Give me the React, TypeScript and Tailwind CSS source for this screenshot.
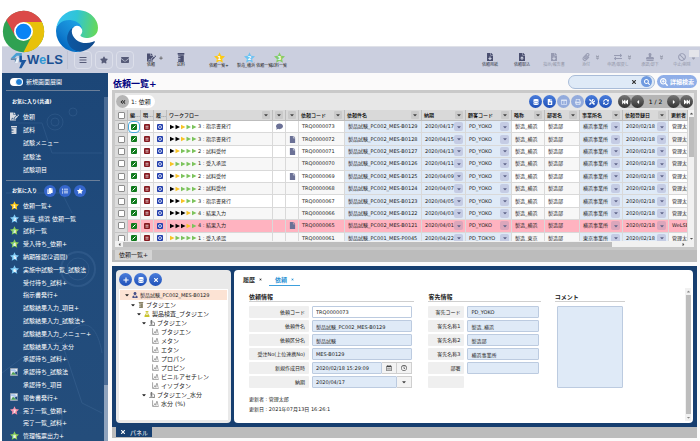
import type { ReactNode } from "react";
import type { IconType } from "react-icons";
import {
  FaAngleDoubleDown, FaAngleDoubleLeft, FaBan, FaBars, FaCaretDown, FaCaretLeft, FaCaretRight, FaCaretUp,
  FaColumns, FaComment, FaCopy, FaDatabase, FaEnvelope, FaExchangeAlt, FaFastBackward, FaFastForward,
  FaFile, FaFileDownload, FaFileSignature, FaFileUpload, FaFlask, FaListUl, FaMicroscope, FaPaperclip,
  FaPlus, FaPrescriptionBottle, FaPrint, FaRegCalendarAlt, FaRegClock, FaSearch, FaSearchPlus, FaStamp,
  FaStar, FaSyncAlt, FaTimes, FaTools, FaUserTie,
} from "react-icons/fa";
import clsx from "clsx";

/* ---------- logos and small drawings ---------- */

function ChromeLogo() {
  return (
    <svg viewBox="-1 -1 50 50" className="size-[43px]" aria-label="Chrome">
      <circle cx="24" cy="24" r="24" fill="#2fa152" />
      <path d="M24 13H45.4A24 24 0 0 1 24 48L33.5 29.5Z" fill="#e8c10a" />
      <path d="M4 10.700A24 24 0 0 1 45.400 13H24L14.500 29.500Z" fill="#db4a48" />
      <circle cx="24" cy="24" r="11" fill="#fff" />
      <circle cx="24" cy="24" r="9" fill="#0a84f5" />
    </svg>
  );
}

function EdgeLogo() {
  return (
    <svg viewBox="0 0 256 256" className="size-[42px]" aria-label="Edge">
      <defs>
        <linearGradient id="edgeDark" x1="60" y1="180" x2="240" y2="180" gradientUnits="userSpaceOnUse">
          <stop offset="0" stopColor="#0c59a4" />
          <stop offset="1" stopColor="#114a8b" />
        </linearGradient>
        <linearGradient id="edgeMid" x1="150" y1="100" x2="40" y2="225" gradientUnits="userSpaceOnUse">
          <stop offset="0" stopColor="#1b9de2" />
          <stop offset="0.6" stopColor="#1380d0" />
          <stop offset="1" stopColor="#0067c0" />
        </linearGradient>
        <linearGradient id="edgeTop" x1="10" y1="70" x2="250" y2="110" gradientUnits="userSpaceOnUse">
          <stop offset="0" stopColor="#35c1f1" />
          <stop offset="0.45" stopColor="#2fc5d6" />
          <stop offset="1" stopColor="#66d85a" />
        </linearGradient>
      </defs>
      <path fill="url(#edgeDark)" d="M231 190.5c-3.4 1.8-6.9 3.4-10.500 4.700a101.500 101.500 0 0 1-35.900 6.500c-47.300 0-88.500-32.500-88.500-74.300a31.500 31.500 0 0 1 16.400-27.300c-42.800 1.800-53.800 46.400-53.800 72.500 0 73.900 68.100 81.400 82.800 81.400 7.900 0 19.800-2.300 27-4.600l1.300-.4a128.300 128.300 0 0 0 66.600-52.800 4 4 0 0 0-5.400-5.700Z" />
      <path fill="url(#edgeMid)" d="M105.700 241.400a79.200 79.200 0 0 1-22.700-21.300 80.700 80.700 0 0 1 29.500-120c3.200-1.500 8.500-4.100 15.600-4a32.400 32.400 0 0 1 25.700 13 31.900 31.900 0 0 1 6.300 18.700c0-.2 24.500-79.600-80-79.600-43.900 0-80 41.600-80 78.200a130.200 130.200 0 0 0 12.100 56 128 128 0 0 0 156.400 67 75.500 75.500 0 0 1-62.800-8Z" />
      <path fill="url(#edgeTop)" d="M152.300 148.900c-.9 1-3.400 2.500-3.400 5.600 0 2.600 1.700 5.200 4.800 7.300 14.300 10 41.400 8.600 41.500 8.600a59.600 59.600 0 0 0 30.300-8.300 61.400 61.400 0 0 0 30.400-52.900c.3-22.400-8-37.300-11.300-43.900C223.500 23.900 177.700 0 128 0A128 128 0 0 0 0 126.200c.5-36.500 36.800-66 80-66 3.500 0 23.500.3 42 10a72.600 72.600 0 0 1 30.900 29.300c6.100 10.600 7.200 24.100 7.200 29.500 0 5.400-2.700 13.300-7.800 19.900Z" />
    </svg>
  );
}

function WelsMark() {
  return (
    <svg viewBox="0 0 50 54" className="h-[18px] w-[17px]" aria-hidden="true">
      <path d="M2 22 18 6H35V29H28V14H20L13 22Z" fill="#4a9fd4" />
      <path d="M2 22H20V35H14V27H2Z" fill="#5f86ad" />
      <path d="M20 22H27L22 36H14Z" fill="#e9f1f8" />
      <path d="M28 14H35V27H49L34 52H27L34 34H28Z" fill="#1c57a0" />
    </svg>
  );
}

function NumberStar({ n, color, className }: { n: number; color: string; className?: string }) {
  return (
    <svg viewBox="0 0 24 24" className={clsx("shrink-0", className)} aria-hidden="true">
      <path d="M12 0.500 15.500 8.300 24 9.200 17.700 15 19.400 23.500 12 19.200 4.600 23.500 6.300 15 0 9.200 8.500 8.300Z" fill={color} />
      <text x="12" y="17.500" textAnchor="middle" fontSize="12" fontWeight="bold" fill="#fff">{n}</text>
    </svg>
  );
}

function BrokenImage() {
  return (
    <svg viewBox="0 0 24 24" className="size-2 shrink-0" aria-hidden="true">
      <path d="M1 1H23V23H1Z" fill="#e8eef5" stroke="#8a94a3" strokeWidth="2" />
      <path d="M3 20 9 11 14 16 20 20Z" fill="#4b9e52" />
      <path d="M3 4H15L19 9V13L3 8Z" fill="#a9c4ea" />
      <path d="M13 14 22 10V22Z" fill="#1f4a7b" />
    </svg>
  );
}

function PeakChart() {
  return (
    <svg viewBox="0 0 24 24" className="size-[7px] shrink-0" fill="none" stroke="#666" strokeWidth="2" aria-hidden="true">
      <path d="M2 1V22H23" />
      <path d="M5 19C9 18 9 12 10 12S12 18 13 18 15 4 17 4 19 18 22 19" />
    </svg>
  );
}

function Arrows({ steps }: { steps: string }) {
  const fill: Record<string, string> = { k: "#000", y: "#f7c325", g: "#7cc35c" };
  return (
    <svg viewBox="0 0 54 12" className="h-[6px] w-[27px] shrink-0" aria-hidden="true">
      {steps.split("").map((s, i) => (
        <path key={i} d={`M${i * 11} 1.500 ${i * 11 + 9} 6 ${i * 11} 10.500Z`} fill={fill[s]} />
      ))}
    </svg>
  );
}

/* ---------- header ---------- */

function HeaderItem({ icon, label, faded, more }: { icon: ReactNode; label: string; faded?: boolean; more?: boolean }) {
  return (
    <button
      type="button"
      className={clsx(
        "relative flex w-8 flex-col items-center text-[4px] leading-[6px] whitespace-nowrap text-[#33374a]",
        faded && "opacity-40"
      )}
    >
      <span className="flex h-[9px] items-center text-[8px] text-[#4a4f70]">{icon}</span>
      {label}
      {more && <FaAngleDoubleDown className="absolute top-0.5 right-0.5 text-[5px]" />}
    </button>
  );
}

function Header() {
  const square = "flex size-[18px] items-center justify-center rounded-sm border border-[#dcdfea] text-[8px] text-[#565b78]";
  const starItem = "flex w-[30px] flex-col items-center text-[4px] leading-[6px] whitespace-nowrap text-[#222]";
  return (
    <header className="ml-0.5 flex h-[27px] shrink-0 items-center border-t border-[#dfe1e8] bg-[#cbcfdf]">
      <div className="flex w-[66px] items-center border-r border-[#bfc3d4] pl-2">
        <WelsMark />
        <span className="font-['Liberation_Sans',sans-serif] text-[13px] leading-4 font-bold text-[#1a4f92]">
          W<span className="text-[#2f97d4]">e</span>LS
        </span>
      </div>
      <div className="flex gap-[3px] pl-1.5">
        <button type="button" aria-label="メニュー" className={square}><FaBars /></button>
        <button type="button" aria-label="お気に入り" className={square}><FaStar /></button>
        <button type="button" aria-label="メッセージ" className={square}><FaEnvelope /></button>
      </div>
      <div className="flex pl-0.5">
        <button type="button" className={clsx(starItem, "relative")}>
          <FaFileSignature className="h-[9px] text-[9px] text-[#4a4f70]" />
          依頼
          <FaPlus className="absolute top-[3px] right-[3px] text-[4px] text-[#555]" />
        </button>
        <button type="button" className={starItem}>
          <FaPrescriptionBottle className="h-[9px] text-[8px] text-[#4a4f70]" />
          試料
        </button>
      </div>
      <div className="flex pl-2">
        <button type="button" className={starItem}>
          <NumberStar n={1} color="#fdc914" className="size-[11px]" />
          依頼一覧+
        </button>
        <button type="button" className={starItem}>
          <NumberStar n={2} color="#6ec3f2" className="size-[11px]" />
          <span className="self-start pl-[3px]">製造_横浜 依頼一覧</span>
        </button>
        <button type="button" className={starItem}>
          <NumberStar n={3} color="#86cc66" className="size-[11px]" />
          試料一覧
        </button>
      </div>
      <div className="relative ml-auto flex pr-0.5">
        <HeaderItem icon={<FaFileDownload />} label="依頼用紙" />
        <HeaderItem icon={<FaFileUpload />} label="依頼取込" />
        <HeaderItem icon={<FaFileDownload />} label="指示/報告書" faded />
        <HeaderItem icon={<FaPaperclip />} label="添付" faded more />
        <HeaderItem icon={<FaExchangeAlt />} label="申請/取戻し" faded more />
        <HeaderItem icon={<FaStamp />} label="承認/却下" faded more />
        <HeaderItem icon={<FaBan />} label="中止/削除" faded more />
        <span className="absolute -top-[3px] right-px h-[7px] w-2.5 bg-[#e4e5ea]" />
      </div>
    </header>
  );
}

/* ---------- sidebar ---------- */

const star = (n: number, color: string) => <NumberStar n={n} color={color} className="size-[9px]" />;

const sharedLinks: { label: string; icon?: ReactNode }[] = [
  { label: "依頼", icon: <FaFileSignature className="text-[9px] text-[#d5d9e0]" /> },
  { label: "試料", icon: <FaPrescriptionBottle className="text-[8px] text-[#d5d9e0]" /> },
  { label: "試験メニュー" },
  { label: "試験法" },
  { label: "試験項目" },
];

const favorites: { label: string; icon?: ReactNode }[] = [
  { label: "依頼一覧+", icon: star(1, "#fdc914") },
  { label: "製造_横浜 依頼一覧", icon: star(2, "#7cc9f4") },
  { label: "試料一覧", icon: star(3, "#86cc5a") },
  { label: "受入待ち_依頼+", icon: star(4, "#86cc5a") },
  { label: "納期確認(2週間)", icon: star(5, "#7cc9f4") },
  { label: "実施中試験一覧_試験法", icon: star(6, "#7cc9f4") },
  { label: "受付待ち_試料+" },
  { label: "指示書発行+" },
  { label: "試験結果入力_項目+" },
  { label: "試験結果入力_試験法+" },
  { label: "試験結果入力_メニュー+" },
  { label: "試験結果入力_水分" },
  { label: "承認待ち_試料+" },
  { label: "承認待ち_試験法", icon: <BrokenImage /> },
  { label: "承認待ち_項目" },
  { label: "報告書発行+", icon: <BrokenImage /> },
  { label: "完了一覧_依頼+", icon: star(7, "#f58fa8") },
  { label: "完了一覧_試料+" },
  { label: "管理帳票出力+", icon: star(8, "#86cc5a") },
];

function SideLink({ label, icon }: { label: string; icon?: ReactNode }) {
  return (
    <li className="flex items-center">
      <a href="#" className="flex items-center whitespace-nowrap">
        <span className="flex w-[13px] justify-start">{icon}</span>
        {label}
      </a>
    </li>
  );
}

function Sidebar() {
  const round = "flex size-3 items-center justify-center rounded-full bg-[#3566cc] text-[6px] text-white";
  return (
    <aside className="relative ml-0.5 flex w-[106px] shrink-0 overflow-hidden bg-linear-to-b from-[#1c4677] via-[#204b7c] to-[#244d7b] text-[6px] text-white">
      <svg className="absolute inset-0 size-full opacity-10" fill="none" stroke="#9cc4ee" aria-hidden="true">
        <circle cx="53" cy="49" r="8" />
        <circle cx="53" cy="49" r="4" />
        <circle cx="71" cy="39" r="4" />
        <circle cx="76" cy="196" r="17" strokeWidth="2" />
        <circle cx="76" cy="196" r="11" />
        <path d="M10 50H40L50 80H100M4 120H60L70 140M0 300 40 270H60L80 330 100 340M10 340H60V366M60 270C80 240 95 250 100 280" />
      </svg>
      <div className="relative min-w-0 flex-1 px-1">
        <label className="flex h-[18px] items-center gap-[3px] border-b border-[#6b7f99] pl-1">
          <input
            type="checkbox"
            defaultChecked
            className="h-2 w-[13px] appearance-none rounded-full bg-white before:ml-auto before:block before:size-2 before:rounded-full before:border before:border-white before:bg-[#1d7fd6]"
          />
          新規画面展開
        </label>
        <h2 className="h-[19px] pt-1.5 pl-1.5 text-[5px] leading-[9px] font-bold">お気に入り(共通)</h2>
        <ul className="grid h-[66px] auto-rows-fr pl-1">
          {sharedLinks.map((l) => <SideLink key={l.label} {...l} />)}
        </ul>
        <div className="mt-1 flex items-center gap-[3px] border-t border-[#6b7f99] pt-1 pb-0.5 pl-1.5">
          <h2 className="w-[29px] text-[5px] font-bold whitespace-nowrap">お気に入り</h2>
          <button type="button" aria-label="コピー" className={round}><FaCopy /></button>
          <button type="button" aria-label="一覧" className={round}><FaListUl /></button>
          <button type="button" aria-label="星" className={round}><FaStar /></button>
        </div>
        <ul className="grid h-[243px] auto-rows-fr pl-1">
          {favorites.map((l) => <SideLink key={l.label} {...l} />)}
        </ul>
      </div>
      <div className="relative mt-6 w-1 bg-[#8fa3bd]">
        <div className="h-[288px] bg-[#4a6c96]" />
      </div>
    </aside>
  );
}

/* ---------- request list ---------- */

type Kind = "plain" | "blue" | "drop";

const columns: { label: string; width: string; filter?: boolean }[] = [
  { label: "編…", width: "w-[13px]" },
  { label: "明…", width: "w-[13px]" },
  { label: "履…", width: "w-[13px]" },
  { label: "ワークフロー", width: "w-[106px]", filter: true },
  { label: "", width: "w-[13px]", filter: true },
  { label: "", width: "w-[13px]", filter: true },
  { label: "依頼コード", width: "w-[46px]", filter: true },
  { label: "依頼件名", width: "w-[77px]", filter: true },
  { label: "納期", width: "w-[44px]", filter: true },
  { label: "顧客コード", width: "w-[46px]", filter: true },
  { label: "略称", width: "w-[33px]", filter: true },
  { label: "部署名", width: "w-[35px]", filter: true },
  { label: "事業所名", width: "w-[43px]", filter: true },
  { label: "依頼登録日", width: "w-[46px]", filter: true },
  { label: "更新者", width: "w-auto" },
];

const rows = [
  { code: "TRQ0000073", steps: "kkygg", flow: "3 : 指示書発行", name: "PC002_MES-B0129", due: "2020/04/17", mark: "comment" },
  { code: "TRQ0000072", steps: "kkygg", flow: "3 : 指示書発行", name: "PC002_MES-B0128", due: "2020/04/15", mark: "file" },
  { code: "TRQ0000071", steps: "kyggg", flow: "2 : 試料受付", name: "PC002_MES-B0127", due: "2020/04/13", mark: "file" },
  { code: "TRQ0000070", steps: "ygggg", flow: "1 : 受入承認", name: "PC002_MES-B0126", due: "2020/04/11" },
  { code: "TRQ0000069", steps: "kyggg", flow: "2 : 試料受付", name: "PC002_MES-B0125", due: "2020/04/09", mark: "file" },
  { code: "TRQ0000068", steps: "kyggg", flow: "2 : 試料受付", name: "PC002_MES-B0124", due: "2020/04/07" },
  { code: "TRQ0000067", steps: "kkygg", flow: "3 : 指示書発行", name: "PC002_MES-B0123", due: "2020/04/05" },
  { code: "TRQ0000066", steps: "kkkyg", flow: "4 : 結果入力", name: "PC002_MES-B0122", due: "2020/04/03" },
  { code: "TRQ0000065", steps: "kkkyg", flow: "4 : 結果入力", name: "PC002_MES-B0121", due: "2020/04/01", mark: "file", alert: true, by: "WeLSE" },
  { code: "TRQ0000061", steps: "ygggg", flow: "1 : 受入承認", name: "PC001_MES-P0045", due: "2020/04/22", city: "東京", customer: "PD_TOKYO" },
];

function Cell({ kind = "plain", alert, children }: { kind?: Kind; alert?: boolean; children?: ReactNode }) {
  return (
    <td className={clsx("overflow-hidden border-r border-b border-[#d9d9d9] p-0 pl-[3px] whitespace-nowrap", kind !== "plain" && !alert && "bg-[#dfeaf7]")}>
      {kind === "drop" ? (
        <span className="flex items-center justify-between pr-[2px]">
          {children}
          <button
            type="button"
            aria-label="選択"
            className={clsx("flex size-[9px] shrink-0 items-center justify-center rounded-xs text-[6px] text-[#60668a]", alert ? "bg-[#dba6bb]" : "bg-[#c5cce4]")}
          >
            <FaCaretDown />
          </button>
        </span>
      ) : children}
    </td>
  );
}

function RowIcon({ color, label, children }: { color: string; label: string; children: ReactNode }) {
  return (
    <td className="border-r border-b border-[#d9d9d9] p-0">
      <button type="button" aria-label={label} className={clsx("mx-auto flex size-1.5 items-center justify-center rounded-[1px]", color)}>
        <svg viewBox="0 0 12 12" className="size-1.5" fill="none" stroke="#fff" strokeWidth="2" aria-hidden="true">{children}</svg>
      </button>
    </td>
  );
}

const tick = "mx-auto block size-[7px] appearance-none rounded-[1px] border border-[#8c8c8c] bg-white checked:bg-[#3566cc]";

function RequestTable() {
  return (
    <table className="h-[135px] w-full table-fixed border-separate border-spacing-0 text-[5px] leading-[7px] text-[#222]">
      <thead>
        <tr className="h-[11px] bg-[#d9d9d9]">
          <th className="w-[13px] border-r border-b border-[#bdbdbd] p-0">
            <input type="checkbox" aria-label="すべて選択" className={tick} />
          </th>
          {columns.map((c, i) => (
            <th key={i} className={clsx("overflow-hidden border-r border-b border-[#bdbdbd] p-0 pl-[2px] text-left font-medium whitespace-nowrap text-black", c.width)}>
              <span className="flex items-center justify-between pr-[2px]">
                {c.label}
                {c.filter && (
                  <button type="button" aria-label="絞り込み" className="ml-auto flex size-2 shrink-0 items-center justify-center rounded-[1px] bg-[#cacaca] text-[6px] text-[#444]">
                    <FaCaretDown />
                  </button>
                )}
              </span>
            </th>
          ))}
        </tr>
      </thead>
      <tbody>
        {rows.map((r, i) => {
          const city = r.city ?? "横浜";
          return (
            <tr key={r.code} className={r.alert ? "bg-[#ffb3c0]" : i % 2 ? "bg-[#f7f7f7]" : "bg-white"}>
              <td className="border-r border-b border-[#c4c4c4] bg-[#dcdcdc] p-0">
                <input type="checkbox" aria-label={r.code} className={tick} />
              </td>
              <RowIcon label="編集" color={clsx("bg-[#0f7a1c]", i === 0 && "outline-1 outline-offset-2 outline-[#45a8dc]")}>
                <path d="M3 9 9 3" />
              </RowIcon>
              <RowIcon label="明細" color="bg-[#85191f]"><path d="M3 4.500H9M3 8H9" strokeWidth="1.500" /></RowIcon>
              <RowIcon label="履歴" color="bg-[#2440ae]"><circle cx="6" cy="6" r="3" strokeWidth="1.500" /></RowIcon>
              <Cell>
                <span className="flex items-center gap-px"><Arrows steps={r.steps} />{r.flow}</span>
              </Cell>
              <Cell>{r.mark === "comment" && <FaComment className="text-[7px] text-[#6b7196]" />}</Cell>
              <Cell>{r.mark === "file" && <FaFile className="text-[7px] text-[#6b7196]" />}</Cell>
              <Cell>{r.code}</Cell>
              <Cell kind="blue" alert={r.alert}>製品試験_{r.name}</Cell>
              <Cell kind="drop" alert={r.alert}>{r.due}</Cell>
              <Cell kind="drop" alert={r.alert}>{r.customer ?? "PD_YOKO"}</Cell>
              <Cell>製造_{city}</Cell>
              <Cell>製造部</Cell>
              <Cell kind="drop" alert={r.alert}>{city}事業所</Cell>
              <Cell kind="drop" alert={r.alert}>2020/02/18</Cell>
              <Cell>{r.by ?? "管理太郎"}</Cell>
            </tr>
          );
        })}
      </tbody>
    </table>
  );
}

function RoundButton({ icon: Icon, label, tone }: { icon: IconType; label: string; tone: "blue" | "pale" | "dark" }) {
  return (
    <button
      type="button"
      aria-label={label}
      className={clsx(
        "flex size-[13px] shrink-0 items-center justify-center rounded-full text-[6px]",
        tone === "blue" && "bg-linear-to-b from-[#4a7ddb] to-[#1f50b8] text-white",
        tone === "pale" && "bg-[#93abdc] text-[#dbe4f5]",
        tone === "dark" && "bg-linear-to-b from-[#777] to-[#333] text-white"
      )}
    >
      <Icon />
    </button>
  );
}

function RequestList() {
  return (
    <section className="shrink-0">
      <div className="border-3 border-[#c9c9c9] bg-[#e7e7e7]">
        <div className="flex h-[17px] items-center px-px">
          <button type="button" className="flex items-center gap-0.5 rounded-full bg-white pr-1 text-[6px] leading-[13px] text-[#222]">
            <span className="flex size-[13px] items-center justify-center rounded-full bg-[#b5b5b5] text-[6px]"><FaAngleDoubleLeft /></span>
            1: 依頼
          </button>
          <div className="ml-auto flex gap-px pr-1.5">
            <RoundButton icon={FaDatabase} label="保存" tone="blue" />
            <RoundButton icon={FaFileDownload} label="出力" tone="blue" />
            <RoundButton icon={FaColumns} label="列" tone="pale" />
            <RoundButton icon={FaPrint} label="印刷" tone="pale" />
            <RoundButton icon={FaTools} label="設定" tone="blue" />
            <RoundButton icon={FaSyncAlt} label="更新" tone="blue" />
          </div>
          <div className="flex items-center rounded-full bg-[#b5b5b5]">
            <RoundButton icon={FaFastBackward} label="最初" tone="dark" />
            <RoundButton icon={FaCaretLeft} label="前へ" tone="dark" />
            <span className="w-[23px] text-center text-[6px]">1 / 2</span>
            <RoundButton icon={FaCaretRight} label="次へ" tone="dark" />
            <RoundButton icon={FaFastForward} label="最後" tone="dark" />
          </div>
        </div>
        <div className="flex h-[131px]">
          <div className="min-w-0 flex-1 overflow-hidden"><RequestTable /></div>
          <div className="flex w-1.5 flex-col items-center bg-[#f1f1f1] text-[5px] text-[#555]">
            <FaCaretUp className="my-px" />
            <div className="h-10 w-[5px] bg-[#bdbdbd]" />
            <FaCaretDown className="mt-auto" />
          </div>
        </div>
        <div className="flex h-1.5 items-center bg-[#f1f1f1] pr-2 pl-0.5 text-[5px] text-[#555]">
          <FaCaretLeft />
          <div className="ml-px h-[5px] w-[86%] bg-[#bdbdbd]" />
          <FaCaretRight className="ml-auto" />
        </div>
      </div>
      <div className="flex h-3 bg-[#bcbcbc] pl-[3px]">
        <button type="button" className="h-2.5 bg-[#d4d4d4] px-1 text-[6px] leading-[10px] text-[#222]">依頼一覧+</button>
      </div>
    </section>
  );
}

/* ---------- detail panel ---------- */

const tree: { label: string; pad: string; icon: ReactNode; open?: boolean }[] = [
  { label: "ブタジエン", pad: "pl-[10px]", open: true, icon: <FaPrescriptionBottle className="text-[#8a8468]" /> },
  { label: "製品検査_ブタジエン", pad: "pl-[16px]", open: true, icon: <FaFlask className="text-[#c9c32d]" /> },
  { label: "ブタジエン", pad: "pl-[21px]", open: true, icon: <FaMicroscope className="text-[#777]" /> },
  ...["ブタジエン", "メタン", "エタン", "プロパン", "プロピン", "ビニルアセチレン", "イソブタン"].map((label) => ({
    label, pad: "pl-[32px]", icon: <PeakChart />,
  })),
  { label: "ブタジエン_水分", pad: "pl-[21px]", open: true, icon: <FaMicroscope className="text-[#777]" /> },
  { label: "水分 (%)", pad: "pl-[32px]", icon: <PeakChart /> },
];

function SampleTree() {
  return (
    <div className="flex w-[115px] shrink-0 flex-col rounded-sm bg-[#e9e9e9] p-[3px]">
      <div className="flex gap-0.5 pb-[3px]">
        <RoundButton icon={FaPlus} label="追加" tone="blue" />
        <RoundButton icon={FaDatabase} label="保存" tone="blue" />
        <RoundButton icon={FaTimes} label="閉じる" tone="blue" />
      </div>
      <ul className="flex-1 bg-white p-px text-[6px] leading-[9px] whitespace-nowrap text-[#222]">
        <li className="flex h-[10px] items-center gap-0.5 bg-[#fce3d4] pl-1">
          <FaCaretDown /><FaUserTie className="text-[#49518a]" />
          <span className="text-[5px]">製品試験_PC002_MES-B0129</span>
        </li>
        {tree.map((t, i) => (
          <li key={i} className={clsx("flex h-[9px] items-center gap-0.5", t.pad)}>
            {t.open && <FaCaretDown />}
            {t.icon}
            {t.label}
          </li>
        ))}
      </ul>
    </div>
  );
}

const box = "h-3 w-full min-w-0 rounded-[1px] border border-[#bccbe0] px-[3px] text-[5px] leading-[10px] text-[#222]";

function Field({ id, label, labelWidth, children }: { id: string; label: string; labelWidth: string; children?: ReactNode }) {
  return (
    <div className="flex gap-[3px]">
      <label htmlFor={id} className={clsx("h-3 shrink-0 rounded-[1px] bg-[#efefef] pr-1 text-right text-[5px] leading-3 whitespace-nowrap text-[#222]", labelWidth)}>
        {label}
      </label>
      <div className="flex min-w-0 flex-1">{children}</div>
    </div>
  );
}

function Heading({ children }: { children: ReactNode }) {
  return <h3 className="mb-1 border-b border-[#cfcfcf] text-[6px] leading-[9px] font-bold text-[#222]">{children}</h3>;
}

const requestFields = [
  { id: "code", label: "依頼コード", value: "TRQ0000073" },
  { id: "name", label: "依頼件名", value: "製品試験_PC002_MES-B0129" },
  { id: "kind", label: "依頼区分名", value: "製品試験" },
  { id: "order", label: "受注No(上位連携No)", value: "MES-B0129" },
];

const customerFields = [
  { id: "cust", label: "客先コード", value: "PD_YOKO" },
  { id: "cust1", label: "客先名称1", value: "製造_横浜" },
  { id: "cust2", label: "客先名称2", value: "製造部" },
  { id: "cust3", label: "客先名称3", value: "横浜事業所" },
  { id: "dept", label: "部署", value: "" },
];

function RequestDetail() {
  const seg = "flex h-3 w-[15px] shrink-0 items-center justify-center border border-l-0 border-[#cfcfcf] bg-[#f3f3f3] text-[6px] text-[#444]";
  return (
    <div className="flex min-w-0 flex-1 flex-col rounded-sm bg-white">
      <div className="flex h-4 items-end gap-1 pl-1.5 text-[6px] font-bold">
        <button type="button" className="flex h-[13px] items-center gap-1 px-[3px] text-[#333]">履歴 <FaTimes className="text-[3px]" /></button>
        <button type="button" className="flex h-[13px] items-center gap-1 border-b border-[#3d9fdc] px-1.5 text-[#2a92d4]">依頼 <FaTimes className="text-[3px]" /></button>
      </div>
      <div className="flex min-h-0 flex-1 pt-0.5">
        <div className="grid min-w-0 flex-1 grid-cols-[165fr_112fr_130fr] content-start gap-x-3.5 pt-1 pl-[15px]">
          <div>
            <Heading>依頼情報</Heading>
            <div className="flex flex-col gap-0.5 pr-0.5">
              {requestFields.map((f, i) => (
                <Field key={f.id} id={f.id} label={f.label} labelWidth="w-[60px]">
                  <input id={f.id} defaultValue={f.value} className={clsx(box, i === 0 ? "bg-white" : "bg-[#dfeaf7]")} />
                </Field>
              ))}
              <Field id="created" label="新規作成日時" labelWidth="w-[60px]">
                <input id="created" defaultValue="2020/02/18 15:29:09" className={clsx(box, "bg-[#dfeaf7]")} />
                <button type="button" aria-label="日付" className={seg}><FaRegCalendarAlt /></button>
                <button type="button" aria-label="時刻" className={seg}><FaRegClock /></button>
              </Field>
              <Field id="due" label="納期" labelWidth="w-[60px]">
                <select id="due" className={clsx(box, "appearance-none bg-[#dfeaf7]")}><option>2020/04/17</option></select>
                <span className={clsx(seg, "pointer-events-none")}><FaCaretDown /></span>
              </Field>
            </div>
            <div className="pt-1.5 text-[5px] leading-[10px] text-[#222]">
              <p>更新者 : 管理太郎</p>
              <p>更新日 : 2021年07月13日 16:26:1</p>
            </div>
          </div>
          <div>
            <Heading>客先情報</Heading>
            <div className="flex flex-col gap-0.5 pr-0.5">
              {customerFields.map((f) => (
                <Field key={f.id} id={f.id} label={f.label} labelWidth="w-[36px]">
                  <input id={f.id} defaultValue={f.value} className={clsx(box, "bg-[#dfeaf7]")} />
                </Field>
              ))}
              <div className="h-3 w-[36px] rounded-[1px] bg-[#efefef]" />
            </div>
          </div>
          <div className="w-[70px]">
            <Heading><label htmlFor="comment">コメント</label></Heading>
            <div className="px-0.5">
              <textarea id="comment" className="block h-[82px] w-full resize-none rounded-[1px] border border-[#bccbe0] bg-[#dfeaf7] p-1 text-[5px]" />
            </div>
          </div>
        </div>
        <div className="mr-0.5 mb-0.5 flex w-1.5 flex-col items-center bg-[#f1f1f1] text-[5px] text-[#888]">
          <FaCaretUp className="my-px" />
          <div className="w-[5px] flex-1 bg-[#bdbdbd]" />
          <FaCaretDown className="my-px" />
        </div>
      </div>
    </div>
  );
}

export default function App() {
  return (
    <div className="flex h-screen flex-col overflow-hidden bg-white font-['DejaVu_Sans','Noto_Sans_CJK_JP',sans-serif]">
      <div className="relative z-10 flex h-[46px] shrink-0 items-start gap-[11px] pt-2.5 pl-0.5">
        <ChromeLogo />
        <EdgeLogo />
      </div>
      <Header />
      <div className="flex min-h-0 flex-1">
        <Sidebar />
        <main className="flex min-w-0 flex-1 flex-col bg-[#fbfafa] pr-[3px] pb-[3px] pl-1">
          <div className="flex h-[17px] shrink-0 items-center">
            <h1 className="pt-1 pl-px text-[9px] leading-3 font-bold text-[#00007f]">依頼一覧+</h1>
            <div className="ml-auto flex h-3.5 w-[87px] items-center rounded-full border border-[#a9bcd8] bg-[#dfeaf7] pr-0.5 pl-2">
              <input type="search" aria-label="検索" className="min-w-0 flex-1 text-[6px] outline-none" />
              <button type="button" aria-label="クリア" className="px-1 text-[6px] text-[#333]"><FaTimes /></button>
              <button type="button" aria-label="検索する" className="flex size-[11px] items-center justify-center rounded-full bg-[#6f9ae0] text-[6px] text-white"><FaSearch /></button>
            </div>
            <button type="button" className="ml-0.5 flex h-[13px] w-10 items-center justify-center gap-0.5 rounded-full bg-[#8faee8] text-[6px] font-bold whitespace-nowrap text-white">
              <FaSearchPlus className="text-[8px]" />詳細検索
            </button>
          </div>
          <RequestList />
          <section className="mt-1 flex min-h-0 flex-1 flex-col bg-[#bcbcbc]">
            <div className="flex min-h-0 flex-1 gap-[3px] bg-[#173f70] p-1">
              <SampleTree />
              <RequestDetail />
            </div>
            <div className="flex h-[11px] shrink-0 pl-1">
              <button type="button" className="flex h-2.5 items-center gap-1 bg-[#173f70] px-1 text-[6px] text-white">
                <FaTimes />パネル
              </button>
            </div>
          </section>
        </main>
      </div>
    </div>
  );
}
